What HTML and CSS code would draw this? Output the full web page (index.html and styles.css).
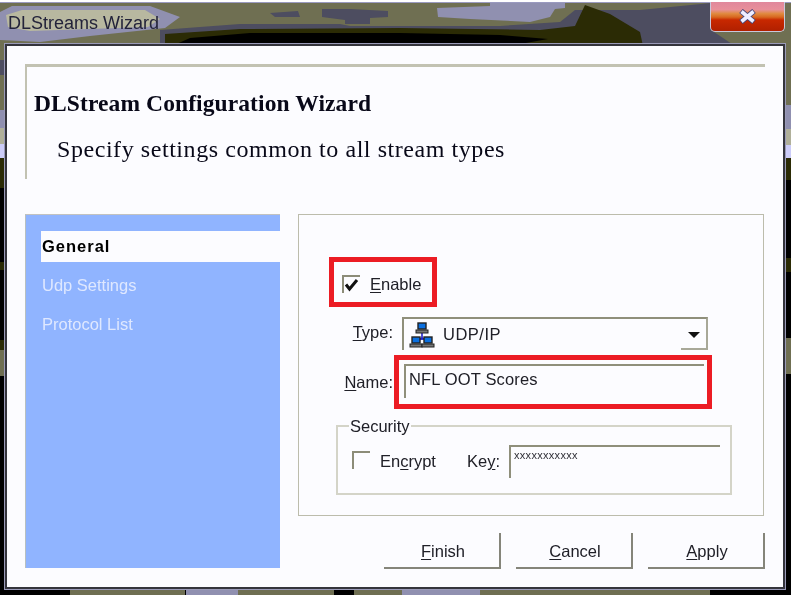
FILE: index.html
```html
<!DOCTYPE html>
<html lang="en">
<head>
<meta charset="utf-8">
<title>DLStreams Wizard</title>
<link rel="stylesheet" href="styles.css">
</head>
<body>
<div class="desktop">
  <svg class="wallpaper" width="791" height="595" viewBox="0 0 791 595" aria-hidden="true">
    <rect width="791" height="595" fill="#000"/>
    <rect y="3" width="791" height="43" fill="#6f6f52"/>
    <path d="M160 30L240 24H340L350 26H500L560 22L575 10H640L711 3V30L735 46H160Z" fill="#4d4d60"/>
    <path d="M165 34L240 29L400 28L540 30L575 26L585 5L610 14L640 32L643 46H165Z" fill="#2b2b05"/>
    <path d="M172 46L190 38L250 33H400L500 35L548 39L520 44L500 46Z" fill="#000"/>
    <path d="M437 8L490 6V3H565V8L555 9L550 17L530 22L470 19L438 17Z" fill="#9090b0"/>
    <path d="M270 13L298 11L300 17L275 17Z" fill="#4d4d60"/>
    <path d="M322 9H350L388 11V17L370 18V24H345V20L322 17Z" fill="#4d4d60"/>
    <path d="M0 12L12 6L150 6L180 17L165 28L90 36L40 42L0 40Z" fill="#9090b0"/>
    <path d="M6 15L22 10H145L160 19L148 27L30 31L8 27Z" fill="#b8b8a0"/>
    <rect y="46" width="7" height="14" fill="#6f6f52"/>
    <rect y="60" width="7" height="15" fill="#4d4d60"/>
    <rect y="75" width="7" height="35" fill="#6f6f52"/>
    <rect y="110" width="7" height="18" fill="#9090b0"/>
    <rect y="128" width="7" height="16" fill="#b0b09a"/>
    <rect y="144" width="7" height="14" fill="#ccccf8"/>
    <rect y="158" width="7" height="30" fill="#2b2b05"/>
    <rect y="262" width="7" height="8" fill="#2b2b05"/>
    <rect y="340" width="7" height="10" fill="#2b2b05"/>
    <rect y="350" width="7" height="26" fill="#6f6f52"/>
    <rect x="783" y="46" width="8" height="60" fill="#6f6f52"/>
    <rect x="783" y="105" width="8" height="24" fill="#9090b0"/>
    <rect x="783" y="129" width="8" height="16" fill="#b0b09a"/>
    <rect x="783" y="145" width="8" height="13" fill="#ccccf8"/>
    <rect x="783" y="158" width="8" height="22" fill="#2b2b05"/>
    <rect x="783" y="258" width="8" height="14" fill="#2b2b05"/>
    <rect x="783" y="338" width="8" height="36" fill="#6f6f52"/>
    <rect x="70" y="588" width="115" height="7" fill="#6f6f52"/>
    <rect x="186" y="588" width="52" height="7" fill="#9090b0"/>
    <rect x="238" y="588" width="96" height="7" fill="#6f6f52"/>
    <rect x="354" y="588" width="48" height="7" fill="#6f6f52"/>
    <rect x="402" y="588" width="78" height="7" fill="#9090b0"/>
    <rect x="480" y="588" width="230" height="7" fill="#6f6f52"/>
  </svg>

  <header class="titlebar">
    <span class="title-text">DLStreams Wizard</span>
    <span class="close-btn"><svg width="19" height="15" viewBox="0 0 19 15" aria-hidden="true"><path d="M3 2L16 13M16 2L3 13" stroke="#44447a" stroke-width="5.5"/><path d="M3.5 2.5L15.5 12.5M15.5 2.5L3.5 12.5" stroke="#eef" stroke-width="3.6"/></svg></span>
  </header>

  <main class="dialog">
    <section class="banner">
      <h1 class="banner-title">DLStream Configuration Wizard</h1>
      <p class="banner-sub">Specify settings common to all stream types</p>
    </section>

    <div class="columns">
      <nav class="steps">
        <div class="step step-active">General</div>
        <div class="step">Udp Settings</div>
        <div class="step">Protocol List</div>
      </nav>

      <section class="panel">
        <label class="check-row">
          <span class="check"><svg width="16" height="16" viewBox="0 0 16 16" aria-hidden="true"><path d="M2 7.5L5.5 12L13 3" fill="none" stroke="#111" stroke-width="3"/></svg></span>
          <span><u>E</u>nable</span>
        </label>

        <div class="field-row field-type">
          <span class="field-label"><u>T</u>ype:</span>
          <div class="combo">
            <svg class="net-icon" width="26" height="30" viewBox="0 0 26 30" aria-hidden="true">
              <path d="M13 12V20M8 21L13 18L18 21" stroke="#2222cc" stroke-width="1.6" fill="none"/>
              <rect x="9" y="3" width="8" height="6" fill="#0a6fe0" stroke="#222" stroke-width="1.4"/>
              <rect x="7" y="10" width="12" height="3" fill="#777" stroke="#222"/>
              <rect x="3" y="17" width="8" height="6" fill="#0a6fe0" stroke="#222" stroke-width="1.4"/>
              <rect x="1" y="24" width="12" height="3" fill="#777" stroke="#222"/>
              <rect x="15" y="17" width="8" height="6" fill="#0a6fe0" stroke="#222" stroke-width="1.4"/>
              <rect x="13" y="24" width="12" height="3" fill="#777" stroke="#222"/>
            </svg>
            <span class="combo-value">UDP/IP</span>
            <span class="combo-arrow"></span>
          </div>
        </div>

        <div class="field-row field-name">
          <span class="field-label"><u>N</u>ame:</span>
          <div class="textbox">NFL OOT Scores</div>
        </div>

        <fieldset class="group">
          <legend class="group-legend">Security</legend>
          <label class="check-inline">
            <span class="check check-small"></span>
            <span>En<u>c</u>rypt</span>
          </label>
          <span class="key-label">Ke<u>y</u>:</span>
          <div class="textbox keybox">xxxxxxxxxxx</div>
        </fieldset>
      </section>
    </div>

    <footer class="actions">
      <button class="btn" type="button"><u>F</u>inish</button>
      <button class="btn" type="button"><u>C</u>ancel</button>
      <button class="btn" type="button"><u>A</u>pply</button>
    </footer>

    <div class="callout callout-enable"></div>
    <div class="callout callout-name"></div>
  </main>
</div>
</body>
</html>
```

FILE: styles.css
```css
* { box-sizing: border-box; }
html, body { margin: 0; padding: 0; }
body { width: 791px; height: 595px; overflow: hidden; font-family: "Liberation Sans", Arial, sans-serif; }

.desktop { position: relative; width: 791px; height: 595px; overflow: hidden; background: #000; }
.wallpaper { position: absolute; inset: 0; filter: blur(0.6px); }

.titlebar { position: relative; height: 44px; display: flex; justify-content: space-between; align-items: flex-start; padding: 0 6px 0 8px; border-top: 2px solid #fff; box-shadow: inset 0 1px 0 #9a9ac0; }
.title-text { margin-top: 11px; font-size: 18px; color: #23233a; filter: blur(0.35px); }
.close-btn { width: 75px; height: 30px; display: flex; align-items: center; justify-content: center; border: 1px solid #c8c8dc; border-top: 0; border-radius: 0 0 5px 5px; background: linear-gradient(#e0889c 0, #e8909a 26%, #e08a40 40%, #d86820 52%, #c82800 62%, #b02000 100%); }

.dialog { position: relative; width: 780px; height: 545px; margin-left: 5px; padding: 18px 18px 0 18px; background: #fcfcff; border: 2px solid #34343c; box-shadow: 0 0 0 1px #9a9ab8; }

.banner { height: 115px; border-top: 3px solid #c2c2b2; border-left: 2px solid #c2c2b2; padding: 21px 0 0 7px; color: #080818; filter: blur(0.3px); }
.banner-title { margin: 0; font: bold 23.5px/30px "Liberation Serif", "Times New Roman", serif; letter-spacing: 0.1px; }
.banner-sub { margin: 16px 0 0 23px; font: 24px/30px "Liberation Serif", "Times New Roman", serif; letter-spacing: 0.56px; }

.columns { display: flex; gap: 18px; height: 354px; margin-top: 35px; }

.steps { width: 255px; height: 354px; background: #90b4ff; border-left: 1px solid #b8c0c0; border-top: 1px solid #c2c2c0; padding-top: 16px; padding-left: 15px; color: #dfe8ff; filter: blur(0.25px); }
.step { height: 39px; padding: 4px 0 0 1px; line-height: 20px; font-size: 16.5px; }
.step-active { height: 31px; padding-top: 5px; margin-bottom: 12px; background: #fcfcff; color: #000; font-weight: bold; letter-spacing: 1px; }
.step-active + .step { height: 39px; padding-top: 1px; }
.step-active + .step + .step { padding-top: 1px; }

.panel { width: 466px; height: 302px; border: 1px solid #bcbcac; padding: 60px 0 0 0; font-size: 16.5px; color: #202028; }
.panel u, .actions u { text-underline-offset: 2px; }

.check-row { display: flex; align-items: center; gap: 10px; height: 18px; margin-left: 43px; filter: blur(0.25px); }
.check { width: 18px; height: 18px; flex: none; display: block; border-top: 2px solid #8c8c78; border-left: 2px solid #8c8c78; }
.check-small { margin-top: 1px; }

.field-row { display: flex; align-items: flex-start; }
.field-label { width: 94px; text-align: right; filter: blur(0.25px); }
.field-type { margin-top: 24px; height: 33px; }
.field-type .field-label { line-height: 30px; }
.field-name { margin-top: 14px; }
.field-name .field-label { line-height: 36px; }

.combo { display: flex; align-items: center; width: 306px; height: 33px; margin-left: 9px; padding-left: 5px; border-top: 2px solid #8f8f7b; border-left: 2px solid #8f8f7b; border-right: 2px solid #a8a898; position: relative; }
.combo::after { content: ""; position: absolute; right: -2px; bottom: 0; width: 27px; height: 2px; background: #a8a898; }
.net-icon { flex: none; }
.combo-value { margin-left: 8px; letter-spacing: 0.5px; filter: blur(0.25px); }
.combo-arrow { position: absolute; right: 6px; top: 13px; width: 0; height: 0; border: 6px solid transparent; border-top: 6px solid #111; border-bottom: 0; }

.textbox { border-top: 2px solid #8f8f7b; border-left: 2px solid #8f8f7b; filter: blur(0.25px); }
.field-name .textbox { width: 300px; height: 34px; margin-left: 11px; padding: 3px 0 0 3px; line-height: 20px; letter-spacing: 0.15px; }

.group { display: flex; align-items: flex-start; width: 396px; height: 78px; margin: 17px 0 0 37px; padding: 0; border: 2px solid #d4d4c8; }
.group-legend { padding: 0 1px; margin-left: 11px; line-height: 18px; filter: blur(0.25px); }
.check-inline { display: flex; align-items: flex-start; gap: 10px; margin: 15px 0 0 14px; line-height: 22px; filter: blur(0.25px); }
.key-label { margin: 15px 0 0 31px; line-height: 22px; filter: blur(0.25px); }
.keybox { width: 211px; height: 33px; margin: 10px 0 0 9px; padding-left: 3px; font-size: 11px; line-height: 16px; letter-spacing: 0.3px; color: #303038; }

.actions { display: flex; justify-content: flex-end; gap: 15px; margin-top: -35px; }
.btn { width: 117px; height: 36px; padding: 3px 0 0 3px; background: transparent; font: 16.5px "Liberation Sans", Arial, sans-serif; color: #202028; border: 0; border-right: 2px solid #85857a; border-bottom: 2px solid #85857a; filter: blur(0.25px); }

.callout { position: absolute; border: 5px solid #ec1c24; }
.callout-enable { left: 322px; top: 211px; width: 108px; height: 50px; }
.callout-name { left: 387px; top: 309px; width: 318px; height: 54px; }
```
